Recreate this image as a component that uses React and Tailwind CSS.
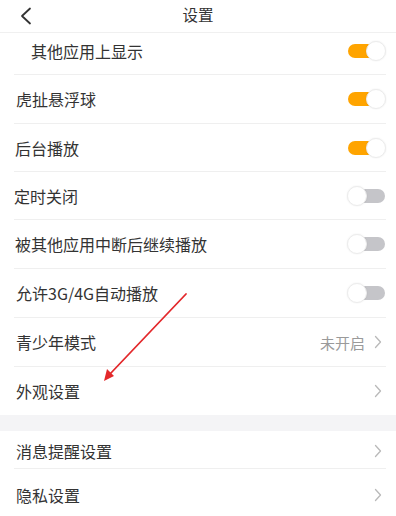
import React from "react";

const font = { fontFamily: '"Noto Sans CJK SC", "Noto Sans", sans-serif' };

function Toggle({ on }) {
  return (
    <div className="relative w-[39px] h-[20px] shrink-0">
      {on ? (
        <>
          <div className="absolute left-[1px] top-[3px] w-[30px] h-[14px] rounded-full bg-[#ffa400]" />
          <div className="absolute right-0 top-0 w-[20px] h-[20px] rounded-full bg-white border border-[#ececec] shadow-[0_0_2px_rgba(0,0,0,0.08)]" />
        </>
      ) : (
        <>
          <div className="absolute right-[1px] top-[3px] w-[30px] h-[14px] rounded-full bg-[#c5c5c9]" />
          <div className="absolute left-0 top-0 w-[20px] h-[20px] rounded-full bg-white border border-[#ececec] shadow-[0_0_2px_rgba(0,0,0,0.08)]" />
        </>
      )}
    </div>
  );
}

function Chevron() {
  return (
    <svg width="8" height="14" viewBox="0 0 8 14" className="shrink-0">
      <path d="M1.5 1.5 L6.5 7 L1.5 12.5" fill="none" stroke="#b9b9b9" strokeWidth="1.3" strokeLinecap="round" strokeLinejoin="round" />
    </svg>
  );
}

function Row({ label, right, className = "", labelClass = "", border = true }) {
  return (
    <div className={`ml-[14px] mr-[10px] flex items-center justify-between ${border ? "border-b border-[#efefef]" : ""} ${className}`}>
      <span className={`text-[16px] text-[#333] leading-none ${labelClass}`}>{label}</span>
      {right}
    </div>
  );
}

export default function App() {
  return (
    <div className="relative w-[396px] h-[516px] overflow-hidden bg-white" style={font}>
      <div className="h-[33px] grid grid-cols-[1fr_auto_1fr] items-center border-b border-[#f0f0f0]">
        <div className="pl-[19px] flex items-center">
          <svg width="14" height="18" viewBox="0 0 14 18">
            <path d="M11 1.5 L3 9 L11 16.5" fill="none" stroke="#333" strokeWidth="1.8" strokeLinecap="round" strokeLinejoin="round" />
          </svg>
        </div>
        <div className="text-[15.5px] text-[#333] pb-[3px]">设置</div>
        <div />
      </div>

      <div className="flex flex-col">
        <Row
          label="其他应用上显示"
          labelClass="pl-[17px]"
          className="h-[42px] pb-[6px]"
          right={<Toggle on />}
        />
        <Row label="虎扯悬浮球" labelClass="pl-[2px]" className="h-[49px]" right={<Toggle on />} />
        <Row label="后台播放" labelClass="pl-[1px]" className="h-[48px]" right={<Toggle on />} />
        <Row label="定时关闭" className="h-[48px]" right={<Toggle on={false} />} />
        <Row label="被其他应用中断后继续播放" labelClass="pl-[1px]" className="h-[49px]" right={<Toggle on={false} />} />
        <Row label="允许3G/4G自动播放" labelClass="pl-[2px]" className="h-[49px]" right={<Toggle on={false} />} />
        <Row
          label="青少年模式"
          labelClass="pl-[2px]"
          className="h-[49px]"
          right={
            <div className="flex items-center gap-[9px] pr-[4px]">
              <span className="text-[15px] text-[#9a9a9a] leading-none">未开启</span>
              <Chevron />
            </div>
          }
        />
        <Row label="外观设置" labelClass="pl-[2px]" className="h-[48px]" border={false} right={<div className="pr-[4px]"><Chevron /></div>} />
        <div className="h-[16px] bg-[#f4f4f6]" />
        <Row label="消息提醒设置" labelClass="pl-[2px]" className="h-[38px] pt-[3px]" right={<div className="pr-[4px]"><Chevron /></div>} />
        <Row label="隐私设置" labelClass="pl-[2px]" className="h-[47px] pt-[5px]" border={false} right={<div className="pr-[4px]"><Chevron /></div>} />
      </div>

      <svg className="absolute left-0 top-0 pointer-events-none" width="396" height="516" viewBox="0 0 396 516">
        <line x1="186" y1="294" x2="110" y2="374" stroke="#e3282b" strokeWidth="1.8" strokeLinecap="round" />
        <polygon points="104,381 107,369 114,376" fill="#e3282b" />
      </svg>
    </div>
  );
}
